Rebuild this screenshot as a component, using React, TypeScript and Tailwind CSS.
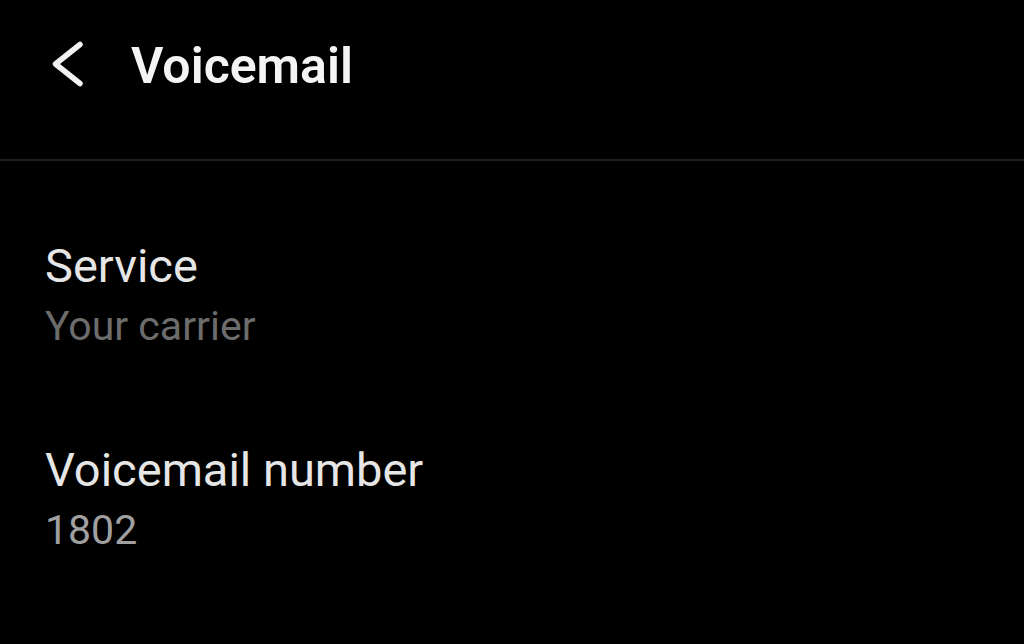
export default function App() {
  const rows = [
    { title: "Service", sub: "Your carrier", subColor: "text-[#6c6c6c]" },
    { title: "Voicemail number", sub: "1802", subColor: "text-[#a0a0a0]" },
  ];

  return (
    <div className="w-[1024px] h-[644px] bg-black overflow-hidden font-['Roboto',sans-serif]">
      {/* Header */}
      <div className="h-[159px] flex items-start">
        <button className="ml-[48px] mt-[36px] w-[44px] h-[56px]">
          <svg width="44" height="56" viewBox="0 0 44 56" fill="none">
            <path d="M32 8.5 L7.5 28 L32 47.5" stroke="#f2f2f2" strokeWidth="5.5" strokeLinecap="round" strokeLinejoin="round" />
          </svg>
        </button>
        <h1 className="ml-[39px] mt-[38px] text-[50px] leading-[56px] font-semibold text-[#f4f4f4]">
          Voicemail
        </h1>
      </div>
      <div className="h-[2px] bg-[#1e1e1e]" />

      {/* Items */}
      <div className="pt-[77px] flex flex-col gap-[90px]">
        {rows.map((r) => (
          <div key={r.title} className="pl-[45px]">
            <div className="text-[47px] leading-[56px] text-[#e6e6e6]">{r.title}</div>
            <div className={`mt-[6px] text-[41px] leading-[52px] ${r.subColor}`}>{r.sub}</div>
          </div>
        ))}
      </div>
    </div>
  );
}
